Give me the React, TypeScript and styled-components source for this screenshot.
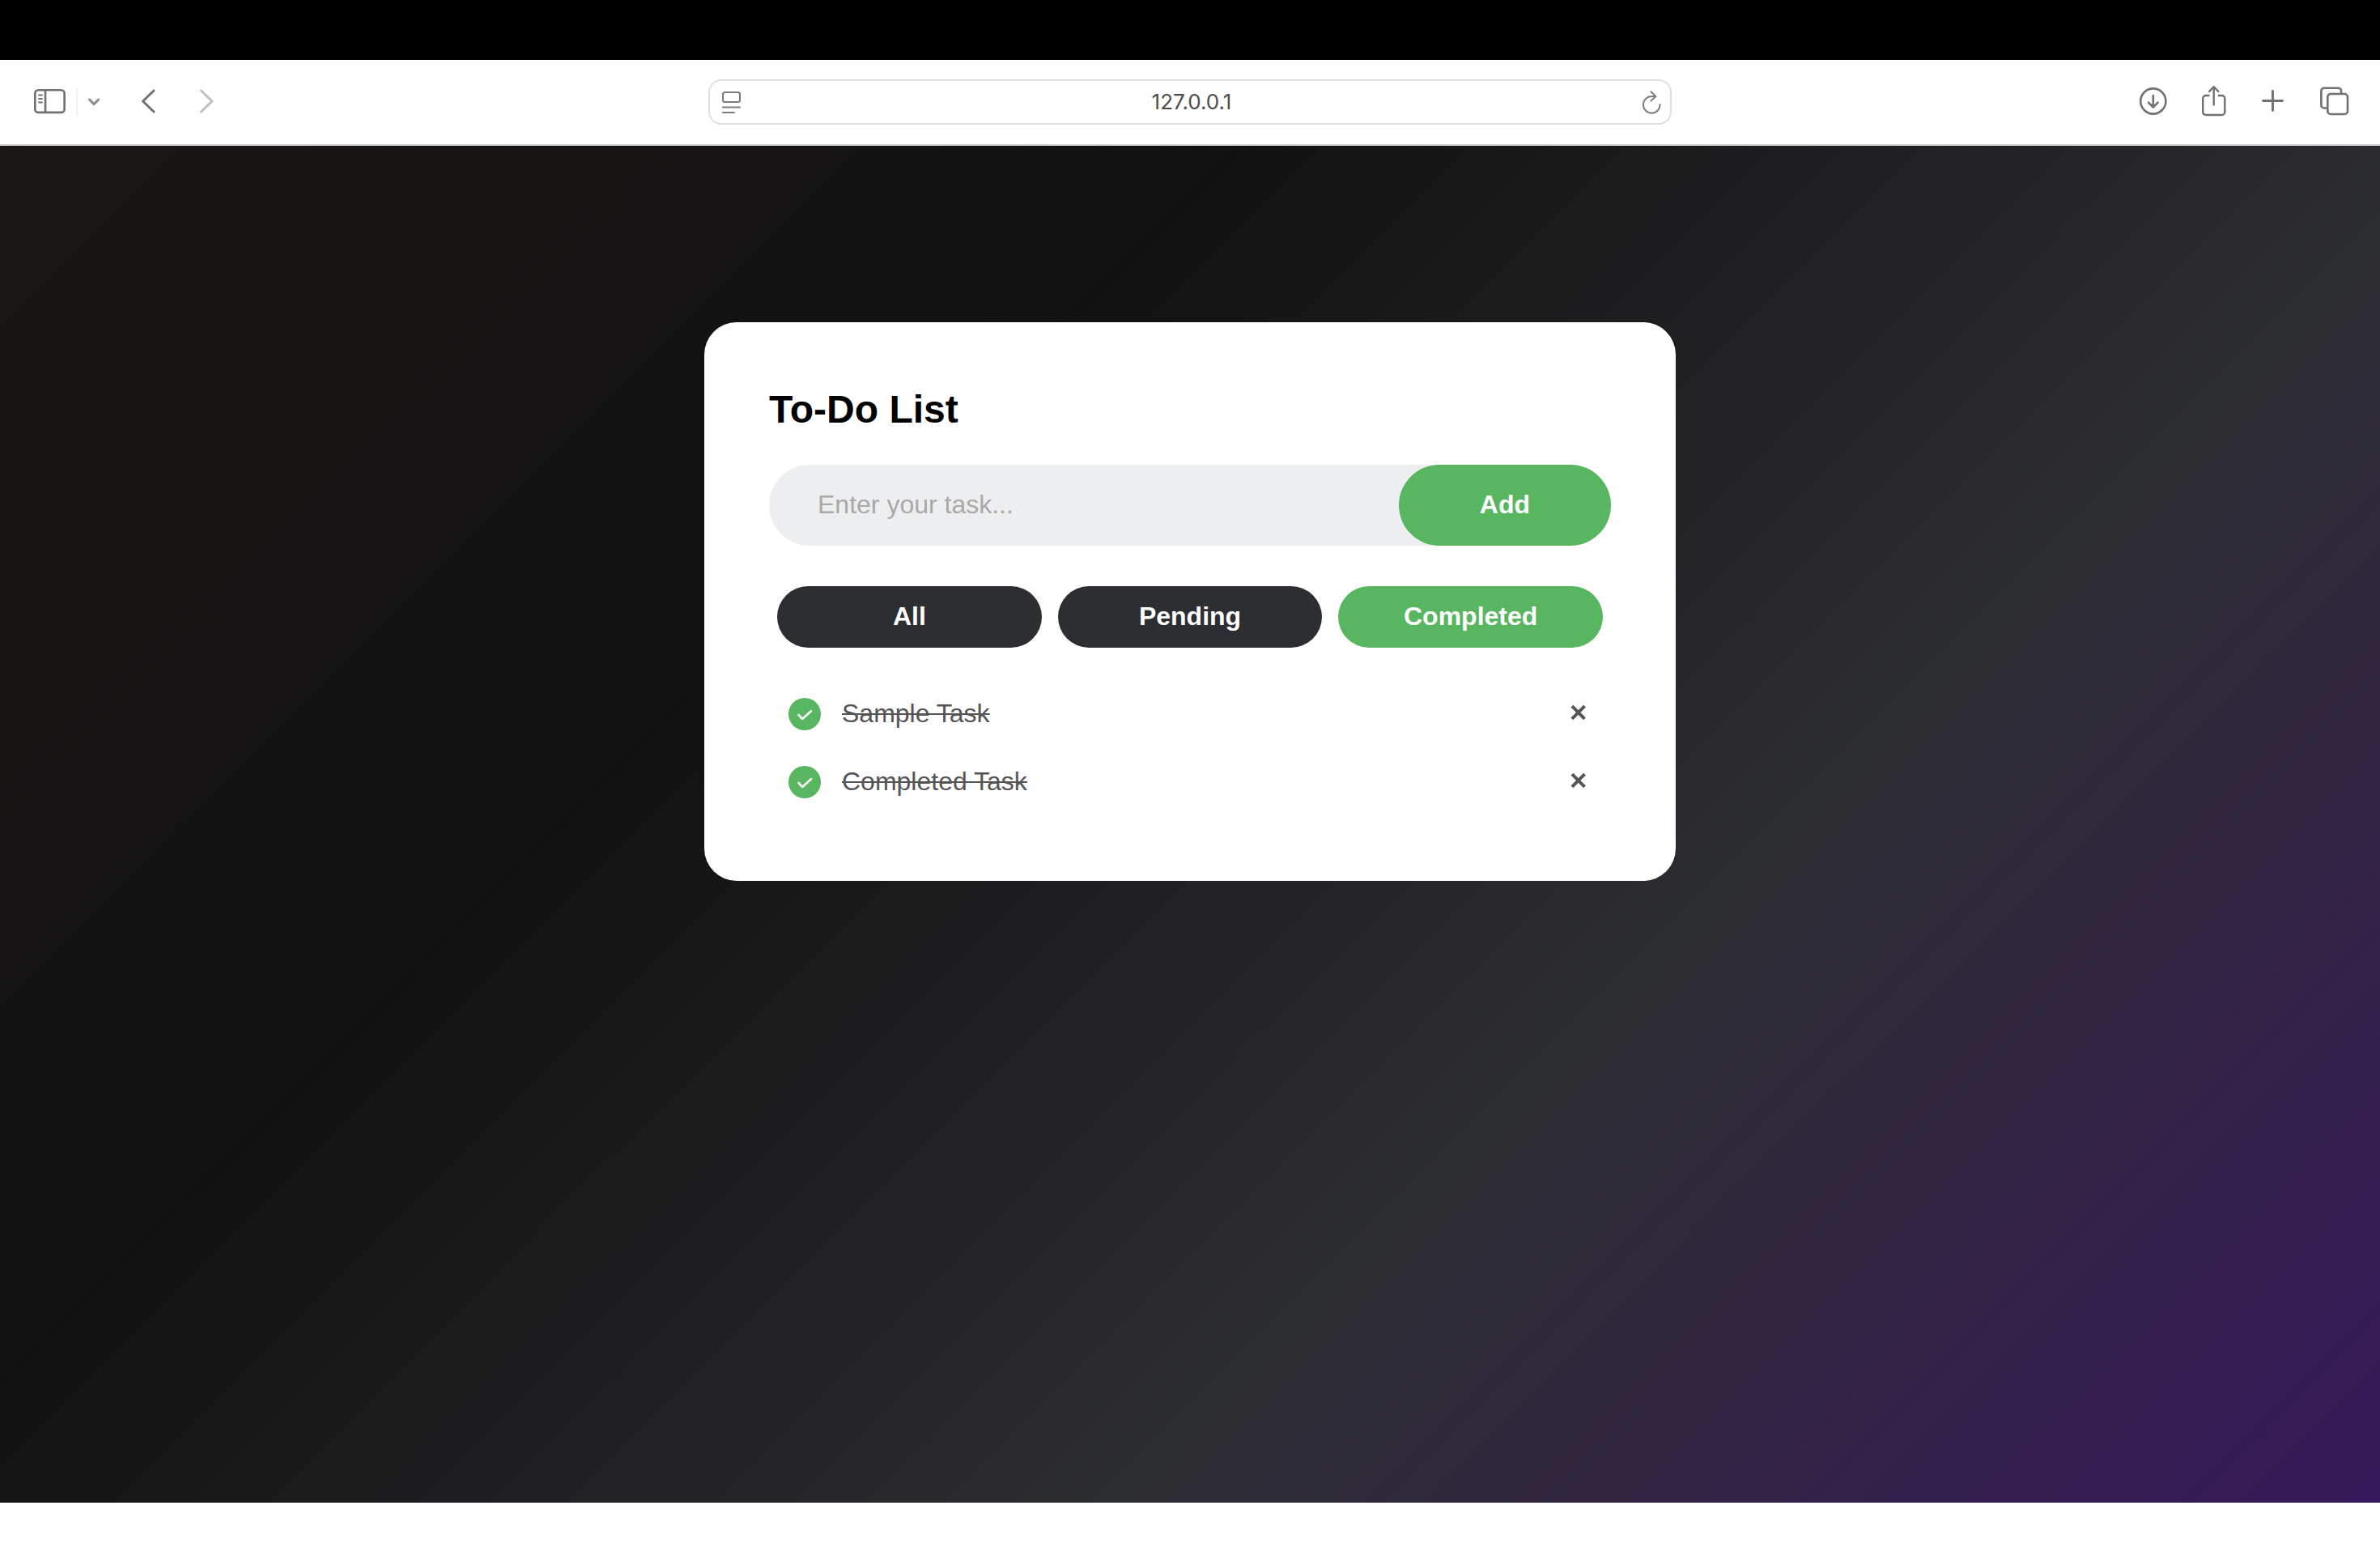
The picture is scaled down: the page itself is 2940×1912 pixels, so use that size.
import React, { useState } from "react";
import styled, { createGlobalStyle } from "styled-components";

const GlobalStyle = createGlobalStyle`
  *, *::before, *::after { box-sizing: border-box; }
  body { margin: 0; background: #fff; font-family: "Liberation Sans", Arial, sans-serif; }
  button, input { font-family: inherit; margin: 0; padding: 0; border: 0; }
  button { cursor: pointer; }
`;

const Screen = styled.div`
  min-height: 100vh;
  display: flex;
  flex-direction: column;
`;

const MenuStrip = styled.div`
  height: 74px;
  background: #000;
`;

const BottomStrip = styled.div`
  height: 56px;
  background: #fff;
`;

const Toolbar = styled.header`
  height: 106px;
  padding: 0 40px 2px;
  display: grid;
  grid-template-columns: 1fr minmax(400px, 1190px) 1fr;
  align-items: center;
  background: #fff;
  box-shadow: inset 0 -1px #ececec, inset 0 -2px #d4d4d4;
`;

const ToolGroup = styled.div<{ $gap: number }>`
  display: flex;
  align-items: center;
  gap: ${(p) => p.$gap}px;
`;

const LeftTools = styled(ToolGroup)`
  margin-left: 2px;
`;

const RightTools = styled(ToolGroup)`
  margin-right: -2px;
  justify-content: flex-end;
`;

const ToolButton = styled.button<{ $color?: string }>`
  display: flex;
  background: none;
  color: ${(p) => p.$color ?? "#717171"};

  svg {
    display: block;
    overflow: visible;
    fill: none;
    stroke: currentColor;
    stroke-linecap: round;
    stroke-linejoin: round;
  }
`;

const Divider = styled.span`
  width: 2px;
  height: 36px;
  background: #f0f0f0;
`;

const AddressBar = styled.div`
  height: 56px;
  padding: 0 10px 0 14px;
  display: flex;
  align-items: center;
  border: 2px solid #dfdfdf;
  border-radius: 16px;
`;

const AddressInput = styled.input`
  flex: 1;
  min-width: 0;
  height: 32px;
  background: none;
  outline: none;
  color: #4c4c4c;
  font: 400 26px/32px Inter, "Liberation Sans", sans-serif;
  text-align: center;
`;

const Page = styled.main`
  flex: 1;
  padding: 218px 24px 80px;
  background: linear-gradient(135deg, #1a1614, #111111, #2d2e32, #37185b);
`;

const Card = styled.section`
  max-width: 1200px;
  margin: 0 auto;
  padding: 80px;
  background: #fff;
  border-radius: 40px;
`;

const Title = styled.h1`
  margin: 0 0 40px;
  color: #000;
  font-size: 48px;
  line-height: 56px;
  font-weight: 700;
`;

const EntryForm = styled.form`
  display: flex;
  height: 100px;
  background: #edeef0;
  border-radius: 50px;
`;

const EntryInput = styled.input`
  flex: 1;
  min-width: 0;
  padding: 0 0 2px 60px;
  background: none;
  outline: none;
  color: #333;
  font-size: 32px;

  &::placeholder { color: #a9a9a9; opacity: 1; }
`;

const AddButton = styled.button`
  padding: 0 100px 2px;
  background: #58b660;
  border-radius: 50px;
  color: #fff;
  font-size: 32px;
  font-weight: 700;
`;

const Filters = styled.div`
  display: flex;
  gap: 20px;
  margin-top: 50px;
  padding: 0 10px;
`;

const FilterButton = styled.button<{ $active: boolean }>`
  flex: 1;
  padding: 19px 0 21px;
  background: ${(p) => (p.$active ? "#58b660" : "#2d2e32")};
  border-radius: 38px;
  color: #fff;
  font-size: 32px;
  line-height: 36px;
  font-weight: 700;
`;

const TaskList = styled.ul`
  margin: 40px 0 0;
  padding: 0;
  list-style: none;
`;

const TaskRow = styled.li`
  display: flex;
  align-items: center;
  height: 84px;
  padding: 0 20px 0 24px;
`;

const TaskLabel = styled.label`
  flex: 1;
  display: flex;
  align-items: center;
  gap: 26px;
`;

const CheckMark = styled.span`
  display: grid;
  place-items: center;

  > * { grid-area: 1 / 1; }
  svg { pointer-events: none; }
`;

const CheckBox = styled.input<{ checked: boolean }>`
  appearance: none;
  width: 40px;
  height: 40px;
  border-radius: 50%;
  background: ${(p) => (p.checked ? "#58b660" : "#edeef0")};
`;

const TaskText = styled.span<{ $done: boolean }>`
  color: #555;
  font-size: 32px;
  line-height: 36px;
  padding-bottom: 2px;
  text-decoration: ${(p) => (p.$done ? "line-through 2px" : "none")};
`;

const RemoveButton = styled.button`
  width: 40px;
  height: 40px;
  display: grid;
  place-items: center;
  padding-bottom: 4px;
  background: none;
`;

const SidebarIcon = () => (
  <svg width="40" height="44" viewBox="0 0 40 44" strokeWidth="2.6">
    <rect x="1.3" y="7.2" width="36.300" height="27.700" rx="4" />
    <path d="M14 7.500v27" />
    <path d="M6 13.500h4M6 18h4M6 22.500h4" strokeWidth="1.9" />
  </svg>
);

const MenuChevron = () => (
  <svg width="16" height="44" viewBox="0 0 16 44" strokeWidth="3">
    <path d="M2.500 19l5.600 5.600L13.700 19" />
  </svg>
);

const BackIcon = () => (
  <svg width="24" height="44" viewBox="0 0 24 44" strokeWidth="3">
    <path d="M18 8L4.500 21L18 34" />
  </svg>
);

const ForwardIcon = () => (
  <svg width="24" height="44" viewBox="0 0 24 44" strokeWidth="3">
    <path d="M4.500 8L18 21L4.500 34" />
  </svg>
);

const DownloadIcon = () => (
  <svg width="36" height="44" viewBox="0 0 36 44" strokeWidth="2.6">
    <circle cx="17.800" cy="21" r="15.600" />
    <path d="M17.800 14v14M12 22.700l5.800 5.800l5.800-5.800" />
  </svg>
);

const ShareIcon = () => (
  <svg width="30" height="44" viewBox="0 0 30 44" strokeWidth="2.400">
    <path d="M9.500 14H5a3.800 3.800 0 0 0-3.800 3.800v16.400A3.800 3.800 0 0 0 5 38h19.500a3.800 3.800 0 0 0 3.800-3.800V17.800A3.800 3.800 0 0 0 24.500 14H20" strokeLinecap="butt" />
    <path d="M14.700 25.500V3.500M9 9l5.700-5.800L20.400 9" />
  </svg>
);

const PlusIcon = () => (
  <svg width="32" height="44" viewBox="0 0 32 44" strokeWidth="2.900">
    <path d="M3.500 20.500h24M15.500 8.500v24" />
  </svg>
);

const TabsIcon = () => (
  <svg width="36" height="44" viewBox="0 0 36 44" strokeWidth="2.600">
    <path d="M8 29.500H5a3.600 3.600 0 0 1-3.600-3.600V8.300A3.600 3.600 0 0 1 5 4.700h17.500a3.600 3.600 0 0 1 3.600 3.600V11" />
    <rect x="9.300" y="12" width="24.700" height="25" rx="3.800" />
  </svg>
);

const PageMenuIcon = () => (
  <svg width="24" height="32" viewBox="0 0 24 32" strokeWidth="2">
    <rect x="2" y="4" width="21" height="12" rx="2.500" />
    <path d="M2 22.500h21M2 29h14" />
  </svg>
);

const ReloadIcon = () => (
  <svg width="24" height="32" viewBox="0 0 24 32" strokeWidth="2">
    <path d="M21.500 19A10.300 10.300 0 1 1 11.200 9.100H16.500M10.500 3.200l6 5.900l-6 5.500" />
  </svg>
);

const CheckIcon = () => (
  <svg width="20" height="20" viewBox="0 0 20 20" fill="none" stroke="#fff" strokeWidth="2.600" strokeLinecap="round" strokeLinejoin="round">
    <path d="M2.500 11l4.700 5L18 6.200" />
  </svg>
);

const CrossIcon = () => (
  <svg width="20" height="20" viewBox="0 0 20 20" fill="none" stroke="#555" strokeWidth="4">
    <path d="M1.900 2.200l15.600 15.600M17.500 2.200L1.900 17.800" />
  </svg>
);

type Filter = "All" | "Pending" | "Completed";
type Task = { id: number; name: string; done: boolean };

const FILTERS: Filter[] = ["All", "Pending", "Completed"];

export default function App() {
  const [filter, setFilter] = useState<Filter>("Completed");
  const [draft, setDraft] = useState("");
  const [tasks, setTasks] = useState<Task[]>([
    { id: 1, name: "Sample Task", done: true },
    { id: 2, name: "Completed Task", done: true },
  ]);

  const addTask = (event: React.FormEvent) => {
    event.preventDefault();
    if (!draft.trim()) return;
    setTasks([...tasks, { id: Date.now(), name: draft.trim(), done: false }]);
    setDraft("");
  };

  const toggle = (id: number) =>
    setTasks(tasks.map((t) => (t.id === id ? { ...t, done: !t.done } : t)));

  const visible = tasks.filter(
    (t) => filter === "All" || t.done === (filter === "Completed")
  );

  return (
    <Screen>
      <GlobalStyle />
      <MenuStrip />
      <Toolbar>
        <LeftTools $gap={48}>
          <ToolGroup $gap={12}>
            <ToolButton aria-label="Sidebar"><SidebarIcon /></ToolButton>
            <Divider />
            <ToolButton aria-label="Tab groups" $color="#8b8b90"><MenuChevron /></ToolButton>
          </ToolGroup>
          <ToolButton aria-label="Back"><BackIcon /></ToolButton>
          <ToolButton aria-label="Forward" $color="#bfbfbf"><ForwardIcon /></ToolButton>
        </LeftTools>
        <AddressBar>
          <ToolButton aria-label="Page menu" $color="#7d7d7d"><PageMenuIcon /></ToolButton>
          <AddressInput type="text" aria-label="Address" defaultValue="127.0.0.1" />
          <ToolButton aria-label="Reload" $color="#7d7d7d"><ReloadIcon /></ToolButton>
        </AddressBar>
        <RightTools $gap={42}>
          <ToolButton aria-label="Downloads"><DownloadIcon /></ToolButton>
          <ToolButton aria-label="Share"><ShareIcon /></ToolButton>
          <ToolButton aria-label="New tab"><PlusIcon /></ToolButton>
          <ToolButton aria-label="Tab overview"><TabsIcon /></ToolButton>
        </RightTools>
      </Toolbar>
      <Page>
        <Card>
          <Title>To-Do List</Title>
          <EntryForm onSubmit={addTask}>
            <EntryInput
              type="text"
              aria-label="Task"
              placeholder="Enter your task..."
              value={draft}
              onChange={(e) => setDraft(e.target.value)}
            />
            <AddButton type="submit">Add</AddButton>
          </EntryForm>
          <Filters>
            {FILTERS.map((name) => (
              <FilterButton key={name} type="button" $active={name === filter} onClick={() => setFilter(name)}>
                {name}
              </FilterButton>
            ))}
          </Filters>
          <TaskList>
            {visible.map((task) => (
              <TaskRow key={task.id}>
                <TaskLabel htmlFor={`task-${task.id}`}>
                  <CheckMark>
                    <CheckBox
                      type="checkbox"
                      id={`task-${task.id}`}
                      checked={task.done}
                      onChange={() => toggle(task.id)}
                    />
                    {task.done && <CheckIcon />}
                  </CheckMark>
                  <TaskText $done={task.done}>{task.name}</TaskText>
                </TaskLabel>
                <RemoveButton
                  type="button"
                  aria-label={`Remove ${task.name}`}
                  onClick={() => setTasks(tasks.filter((t) => t.id !== task.id))}
                >
                  <CrossIcon />
                </RemoveButton>
              </TaskRow>
            ))}
          </TaskList>
        </Card>
      </Page>
      <BottomStrip />
    </Screen>
  );
}
